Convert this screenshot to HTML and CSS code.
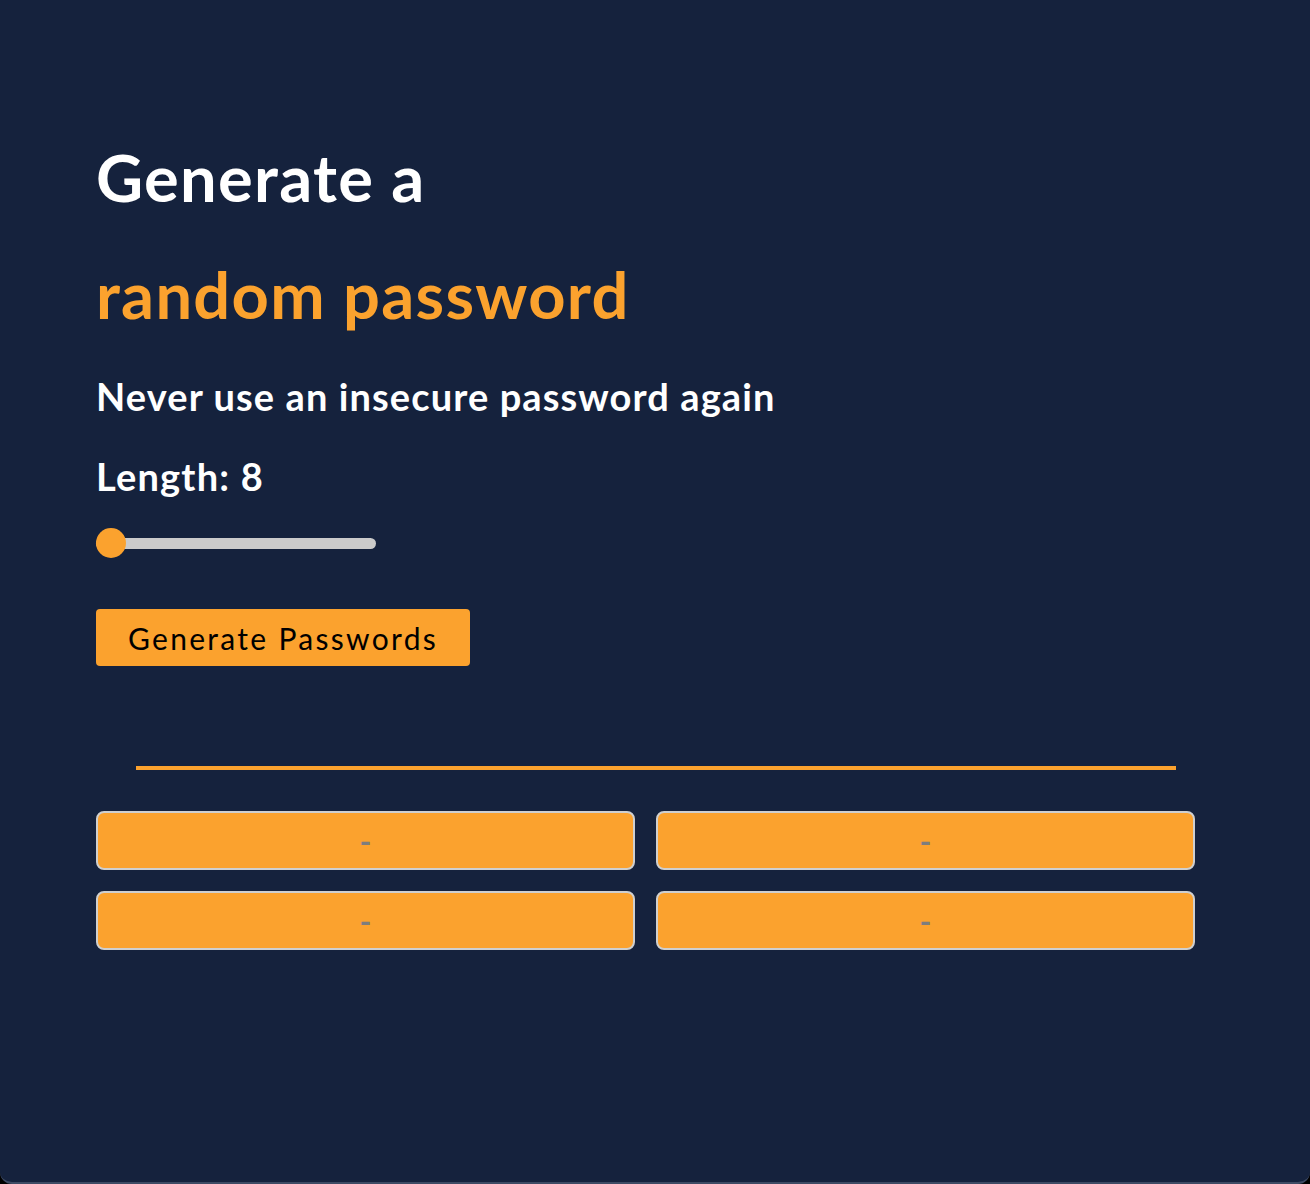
FILE: index.html
```html
<!DOCTYPE html>
<html lang="en">
<head>
<meta charset="utf-8">
<title>Password Generator</title>
<link rel="stylesheet" href="styles.css">
</head>
<body>
<div class="window">
  <main class="app">
    <h1 class="title">Generate a<br><span class="accent">random password</span></h1>
    <p class="tagline">Never use an insecure password again</p>
    <p class="length">Length: 8</p>
    <div class="slider">
      <div class="slider-track"></div>
      <div class="slider-thumb"></div>
    </div>
    <button class="generate">Generate Passwords</button>
    <div class="divider"></div>
    <div class="results">
      <div class="result">-</div>
      <div class="result">-</div>
      <div class="result">-</div>
      <div class="result">-</div>
    </div>
  </main>
</div>
</body>
</html>
```

FILE: styles.css
```css
html {
  background: #000;
}
body {
  margin: 0;
  font-family: Lato, "Noto Sans", sans-serif;
}
.window {
  height: 1184px;
  box-sizing: border-box;
  background: #15223d;
  border-bottom: 2px solid #3e4b64;
  border-radius: 0 0 12px 12px;
  overflow: hidden;
}
.app {
  padding: 119px 0 0 96px;
}
.title {
  margin: 0;
  font-size: 65px;
  line-height: 117px;
  font-weight: 700;
  letter-spacing: 1.3px;
  color: #ffffff;
}
.accent {
  color: #fba22e;
}
.tagline {
  margin: 19px 0 0;
  font-size: 38px;
  line-height: 48px;
  font-weight: 700;
  letter-spacing: 1.1px;
  color: #ffffff;
}
.length {
  margin: 32px 0 0;
  font-size: 38px;
  line-height: 48px;
  font-weight: 700;
  letter-spacing: 1.2px;
  color: #ffffff;
}
.slider {
  position: relative;
  width: 280px;
  height: 30px;
  margin-top: 28px;
  display: flex;
  align-items: center;
}
.slider-track {
  width: 100%;
  height: 11px;
  border-radius: 6px;
  background: #cbcbcb;
}
.slider-thumb {
  position: absolute;
  left: 0;
  top: 0;
  width: 30px;
  height: 30px;
  border-radius: 50%;
  background: #fba22e;
}
.generate {
  display: block;
  margin-top: 51px;
  width: 374px;
  height: 57px;
  border: none;
  border-radius: 4px;
  background: #fba22e;
  color: #000;
  font-family: Lato, "Noto Sans", sans-serif;
  font-size: 30px;
  font-weight: 400;
  letter-spacing: 2.3px;
  padding: 0;
}
.divider {
  margin: 100px 0 0 40px;
  width: 1040px;
  height: 4px;
  background: #fba22e;
}
.results {
  margin-top: 41px;
  display: grid;
  grid-template-columns: 539px 539px;
  grid-auto-rows: 59px;
  column-gap: 21px;
  row-gap: 21px;
}
.result {
  box-sizing: border-box;
  border: 2px solid #cfcfcf;
  border-radius: 8px;
  background: #fba22e;
  color: #7d7d7d;
  font-size: 32px;
  font-weight: 700;
  display: flex;
  align-items: center;
  justify-content: center;
}
```
